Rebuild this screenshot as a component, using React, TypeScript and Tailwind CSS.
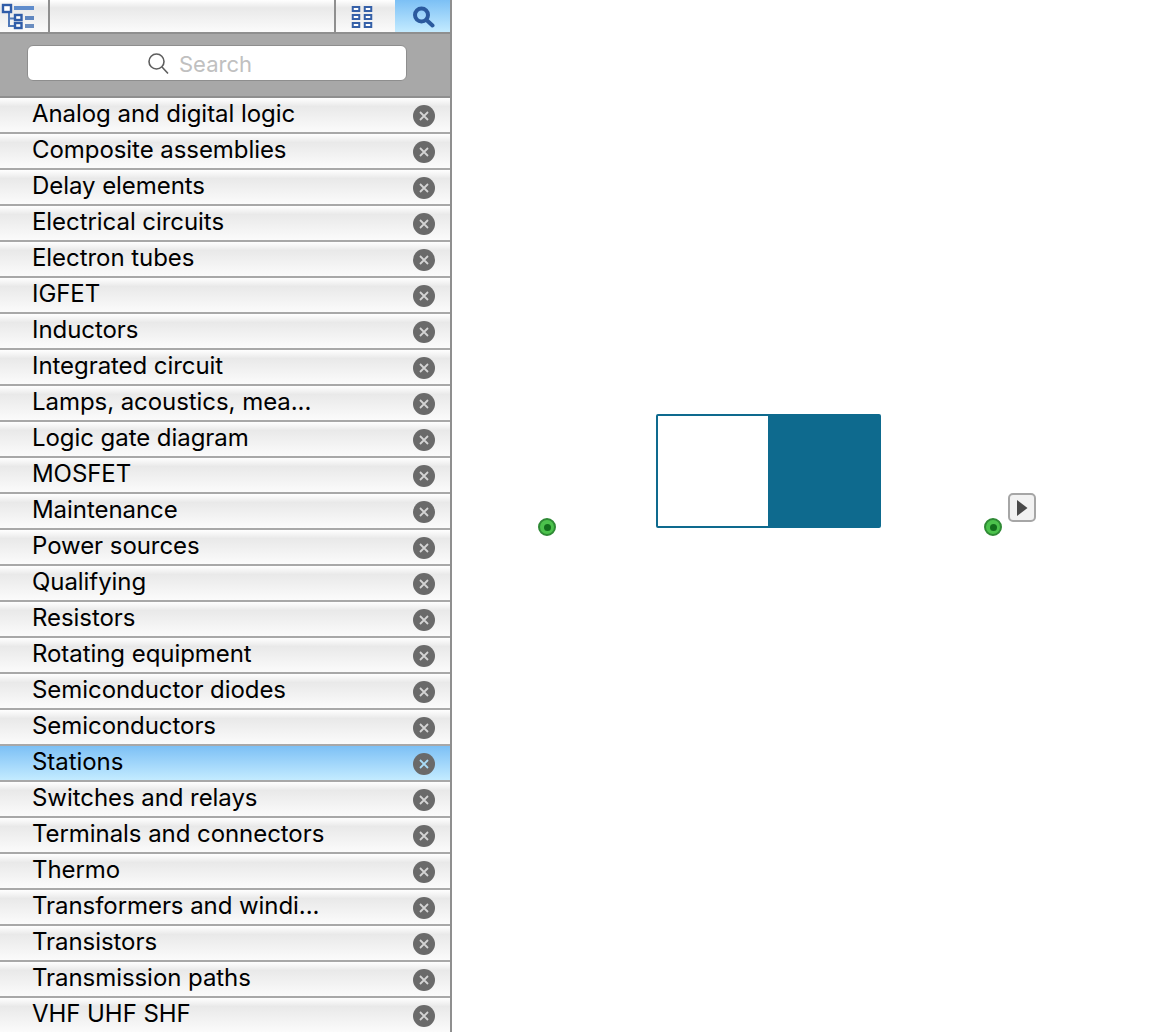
import React from 'react';

const categories = [
  'Analog and digital logic',
  'Composite assemblies',
  'Delay elements',
  'Electrical circuits',
  'Electron tubes',
  'IGFET',
  'Inductors',
  'Integrated circuit',
  'Lamps, acoustics, mea...',
  'Logic gate diagram',
  'MOSFET',
  'Maintenance',
  'Power sources',
  'Qualifying',
  'Resistors',
  'Rotating equipment',
  'Semiconductor diodes',
  'Semiconductors',
  'Stations',
  'Switches and relays',
  'Terminals and connectors',
  'Thermo',
  'Transformers and windi...',
  'Transistors',
  'Transmission paths',
  'VHF UHF SHF',
];

const TreeIcon = () => (
  <svg width="36" height="32" viewBox="0 0 36 32" className="block blur-[0.4px]">
    <path d="M9 12V26H15M9 18.5H15" fill="none" stroke="#4f78b8" strokeWidth="2" />
    <rect x="3" y="5" width="8" height="7" fill="#fff" stroke="#2f5ca8" strokeWidth="2.4" />
    <rect x="15" y="15" width="6.5" height="5" fill="#fff" stroke="#2f5ca8" strokeWidth="2.4" />
    <rect x="15" y="23" width="6.5" height="5" fill="#fff" stroke="#2f5ca8" strokeWidth="2.4" />
    <rect x="14" y="6" width="20" height="4" fill="#5f8ccc" />
    <rect x="25" y="16" width="9" height="4" fill="#5f86c0" />
    <rect x="25" y="24" width="9" height="4" fill="#6a8dc0" />
  </svg>
);

const GridIcon = () => (
  <svg width="22" height="24" viewBox="0 0 22 24" className="block blur-[0.3px]">
    {[0, 1].map((c) =>
      [0, 1, 2].map((r) => (
        <rect
          key={`${c}-${r}`}
          x={1.75 + c * 12}
          y={2 + r * 8}
          width="6.5"
          height="4"
          fill="#fff"
          stroke="#3560a8"
          strokeWidth="2"
        />
      ))
    )}
  </svg>
);

const LoupeIcon = () => (
  <svg width="26" height="24" viewBox="0 0 26 24" className="block blur-[0.3px]">
    <circle cx="11.5" cy="10" r="6.5" fill="none" stroke="#2b5a9e" strokeWidth="4" />
    <path d="M16.5 15L22.5 20.5" stroke="#2b5a9e" strokeWidth="4" strokeLinecap="round" />
  </svg>
);

const CloseBadge = ({ selected }: { selected: boolean }) => (
  <span className="flex h-[22px] w-[22px] items-center justify-center rounded-full bg-[#6a6a6a] blur-[0.3px]">
    <svg width="12" height="12" viewBox="0 0 12 12" className="block">
      <path
        d="M2 2L10 10M10 2L2 10"
        stroke={selected ? '#a9dcf8' : '#d4d4d4'}
        strokeWidth="1.8"
      />
    </svg>
  </span>
);

const Row = ({ label }: { label: string }) => {
  const selected = label === 'Stations';
  return (
    <div
      className={`flex h-[34px] shrink-0 items-center justify-between pl-[32px] pr-[15px] ${
        selected
          ? 'bg-gradient-to-b from-[#7cc0f5] to-[#c3ebff]'
          : 'bg-gradient-to-b from-[#ffffff] via-[#e9e9e9] via-25% to-[#fbfbfb]'
      }`}
    >
      <span className="-mt-[2px] text-[24px] leading-[32px] tracking-[-0.06px] text-black">{label}</span>
      <span className="mt-[1px]">
        <CloseBadge selected={selected} />
      </span>
    </div>
  );
};

const Port = ({ className }: { className: string }) => (
  <div
    className={`absolute flex h-[18px] w-[18px] items-center justify-center rounded-full border-2 border-[#2f8a35] bg-[#4cc24c] blur-[0.4px] ${className}`}
  >
    <div className="h-[7px] w-[7px] rounded-full bg-[#126e1c]" />
  </div>
);

export default function App() {
  return (
    <div className="flex h-[1032px] w-[1162px] overflow-hidden bg-white font-['Inter',sans-serif]">
      <aside className="flex w-[452px] shrink-0 flex-col border-r-2 border-[#8f8f8f]">
        <div className="flex h-[32px] shrink-0 bg-gradient-to-b from-[#ffffff] via-[#e9e9e9] via-25% to-[#fbfbfb]">
          <div className="w-[50px] shrink-0 overflow-hidden border-r-2 border-[#8f8f8f]">
            <TreeIcon />
          </div>
          <div className="flex-1 border-r-2 border-[#8f8f8f]" />
          <div className="flex w-[59px] shrink-0 items-center justify-center pr-[8px] pt-[1px]">
            <GridIcon />
          </div>
          <div className="flex w-[55px] shrink-0 items-center justify-center bg-gradient-to-b from-[#7cc0f5] to-[#c3ebff] pt-[2px]">
            <LoupeIcon />
          </div>
        </div>
        <div className="flex h-[66px] shrink-0 items-start border-y-2 border-[#8f8f8f] bg-[#a8a8a8] pl-[27px] pt-[11px]">
          <div className="flex h-[36px] w-[380px] items-center justify-center gap-[9px] rounded-[6px] border border-[#8e8e8e] bg-white pr-[36px]">
            <svg width="24" height="24" viewBox="0 0 24 24" className="block">
              <circle cx="10.5" cy="10.5" r="7.5" fill="none" stroke="#5e5e5e" strokeWidth="1.6" />
              <path d="M16 16L22 22.5" stroke="#5e5e5e" strokeWidth="1.6" />
            </svg>
            <span className="mt-[2px] text-[22px] leading-[28px] text-[#c0c0c0]">Search</span>
          </div>
        </div>
        <div className="flex flex-col gap-[2px] bg-[#a8a8a8]">
          {categories.map((c) => (
            <Row key={c} label={c} />
          ))}
        </div>
      </aside>

      <main className="relative flex-1">
        <div className="absolute left-[204px] top-[414px] flex h-[114px] w-[225px] rounded-[2px] border-2 border-[#0e6a8e]">
          <div className="w-[110px] bg-white" />
          <div className="flex-1 bg-[#0e6a8e]" />
        </div>
        <Port className="left-[86px] top-[518px]" />
        <Port className="left-[532px] top-[518px]" />
        <div className="absolute left-[556px] top-[493px] flex h-[29px] w-[28px] items-center justify-center rounded-[5px] border-2 border-[#a6a6a6] bg-[#f2f2f2] blur-[0.4px]">
          <svg width="12" height="16" viewBox="0 0 12 16" className="block">
            <path d="M1 0L11.5 8L1 16Z" fill="#4a4a4a" />
          </svg>
        </div>
      </main>
    </div>
  );
}
